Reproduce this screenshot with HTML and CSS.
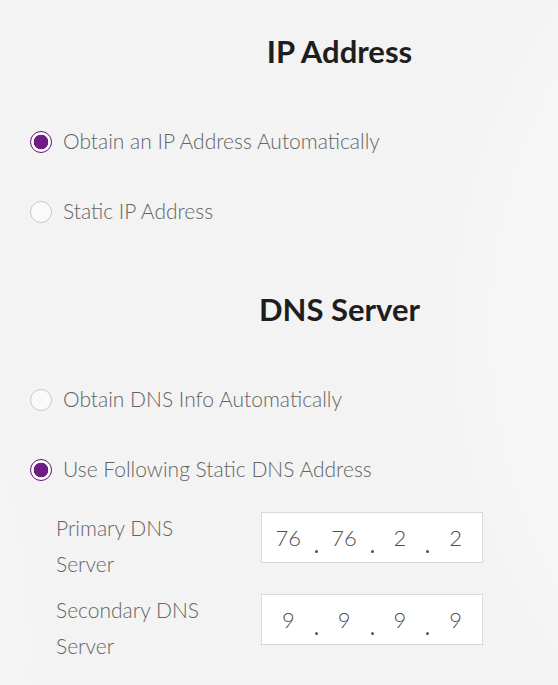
FILE: index.html
```html
<!DOCTYPE html>
<html lang="en">
<head>
<meta charset="utf-8">
<title>Network Settings</title>
<link rel="stylesheet" href="styles.css">
</head>
<body>
<main class="page">
  <section class="group">
    <h2 class="group-title">IP Address</h2>
    <label class="radio-row">
      <input type="radio" name="ip" class="radio" checked>
      <span class="radio-label">Obtain an IP Address Automatically</span>
    </label>
    <label class="radio-row">
      <input type="radio" name="ip" class="radio">
      <span class="radio-label">Static IP Address</span>
    </label>
  </section>

  <section class="group group-dns">
    <h2 class="group-title">DNS Server</h2>
    <label class="radio-row">
      <input type="radio" name="dns" class="radio">
      <span class="radio-label">Obtain DNS Info Automatically</span>
    </label>
    <label class="radio-row">
      <input type="radio" name="dns" class="radio" checked>
      <span class="radio-label">Use Following Static DNS Address</span>
    </label>

    <div class="field-row">
      <div class="field-label">Primary DNS Server</div>
      <div class="ip-box">
        <span class="octet">76</span><span class="dot"></span>
        <span class="octet">76</span><span class="dot"></span>
        <span class="octet">2</span><span class="dot"></span>
        <span class="octet">2</span>
      </div>
    </div>
    <div class="field-row">
      <div class="field-label">Secondary DNS Server</div>
      <div class="ip-box">
        <span class="octet">9</span><span class="dot"></span>
        <span class="octet">9</span><span class="dot"></span>
        <span class="octet">9</span><span class="dot"></span>
        <span class="octet">9</span>
      </div>
    </div>
  </section>
</main>
</body>
</html>
```

FILE: styles.css
```css
html, body {
  margin: 0;
  padding: 0;
}

body {
  width: 558px;
  height: 685px;
  overflow: hidden;
  font-family: Lato, "Open Sans", "DejaVu Sans", sans-serif;
  background-color: #f3f3f3;
  background-image:
    radial-gradient(circle at 1010px 330px, #f6f6f6 0, #f6f6f6 520px, rgba(246,246,246,0) 580px),
    radial-gradient(circle at -520px 640px, #f5f5f5 0, #f5f5f5 525px, rgba(245,245,245,0) 585px);
}

.page {
  display: flex;
  flex-direction: column;
  padding-top: 31px;
}

.group {
  display: flex;
  flex-direction: column;
}

.group-dns {
  margin-top: 42px;
}

.group-title {
  margin: 0 0 36px 121px;
  font-size: 31px;
  line-height: 40px;
  font-weight: 700;
  color: #1e1e20;
  text-align: center;
}

.radio-row {
  display: flex;
  align-items: center;
  height: 70px;
  padding-left: 30px;
  gap: 11px;
}

.radio {
  appearance: none;
  -webkit-appearance: none;
  margin: 0;
  width: 22px;
  height: 22px;
  border-radius: 50%;
  border: 1px solid #c9c9c9;
  background: #fafafa;
  box-sizing: border-box;
  flex: none;
}

.radio:checked {
  border: 1px solid #5e1470;
  background: radial-gradient(circle, #6f1d84 0, #6f1d84 7px, #ffffff 7.6px);
}

.radio-label {
  font-size: 21px;
  font-weight: 300;
  color: #646464;
  padding-bottom: 3px;
}

.field-row {
  display: flex;
  align-items: flex-start;
  height: 82px;
  padding-left: 56px;
}

.group-dns .radio-row:last-of-type {
  margin-bottom: 5px;
}

.field-label {
  width: 160px;
  font-size: 21px;
  font-weight: 300;
  line-height: 36px;
  color: #646464;
}

.ip-box {
  margin-left: 45px;
  margin-top: 2px;
  width: 222px;
  height: 51px;
  box-sizing: border-box;
  border: 1px solid #d9d9d9;
  background: #ffffff;
  display: flex;
  align-items: center;
}

.octet {
  flex: 1;
  text-align: center;
  font-size: 22px;
  font-weight: 300;
  color: #4f4f4f;
  line-height: 51px;
}

.dot {
  width: 3px;
  height: 3px;
  border-radius: 50%;
  background: #555555;
  align-self: flex-end;
  margin-bottom: 9px;
  flex: none;
}
```
